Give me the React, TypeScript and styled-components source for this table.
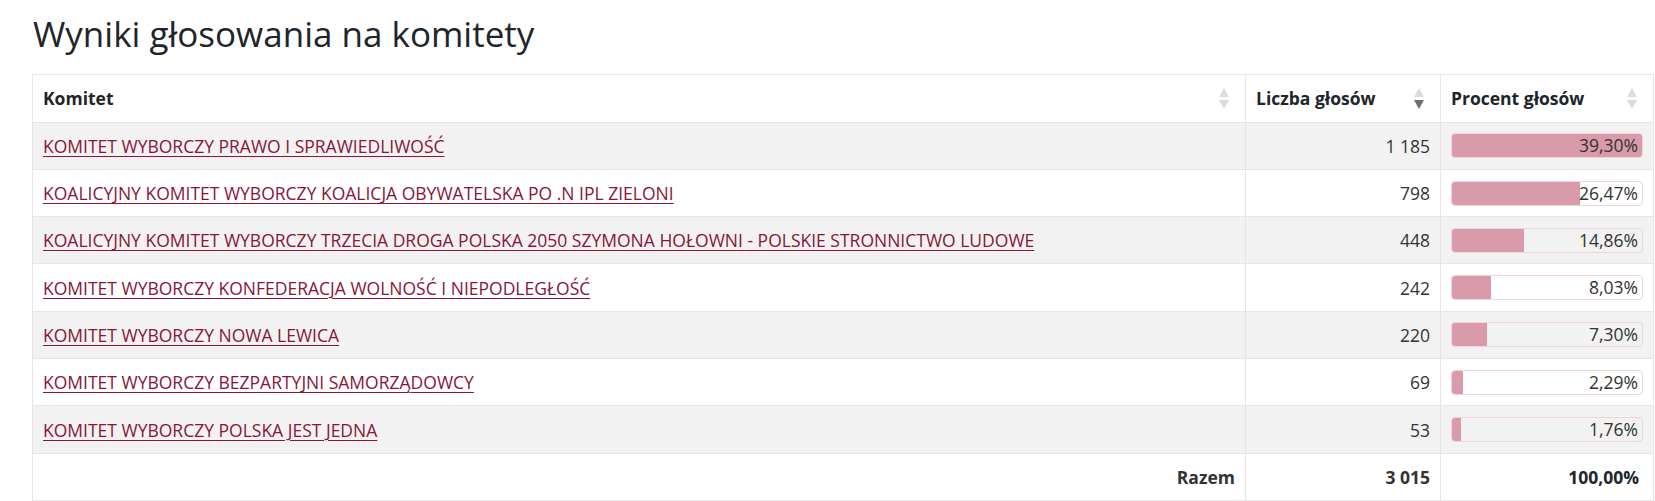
import React from 'react'
import styled, { createGlobalStyle } from 'styled-components'

type Result = {
  name: string,
  votes: string,
  percent: number,
};

const results: Result[] = [
  { name: 'KOMITET WYBORCZY PRAWO I SPRAWIEDLIWOŚĆ', votes: '1 185', percent: 39.3 },
  { name: 'KOALICYJNY KOMITET WYBORCZY KOALICJA OBYWATELSKA PO .N IPL ZIELONI', votes: '798', percent: 26.47 },
  { name: 'KOALICYJNY KOMITET WYBORCZY TRZECIA DROGA POLSKA 2050 SZYMONA HOŁOWNI - POLSKIE STRONNICTWO LUDOWE', votes: '448', percent: 14.86 },
  { name: 'KOMITET WYBORCZY KONFEDERACJA WOLNOŚĆ I NIEPODLEGŁOŚĆ', votes: '242', percent: 8.03 },
  { name: 'KOMITET WYBORCZY NOWA LEWICA', votes: '220', percent: 7.3 },
  { name: 'KOMITET WYBORCZY BEZPARTYJNI SAMORZĄDOWCY', votes: '69', percent: 2.29 },
  { name: 'KOMITET WYBORCZY POLSKA JEST JEDNA', votes: '53', percent: 1.76 },
]

const maxPercent = Math.max(...results.map(r => r.percent))

const formatPercent = (p: number) => p.toFixed(2).replace('.', ',') + '%'

const GlobalStyle = createGlobalStyle`
  body {
    margin: 0;
    background: #fff;
    font-family: "Open Sans", "Noto Sans", sans-serif;
    color: #212529;
  }
`

const Page = styled.main`
  padding: 12px 2px 0 32px;
`

const Title = styled.h1`
  font-size: 35px;
  font-weight: 400;
  line-height: 44px;
  margin: 0 0 18px 1px;
  color: #212529;
`

const Table = styled.table`
  width: 1621px;
  border-collapse: collapse;
  font-size: 17.5px;
  table-layout: fixed;
  border: 1px solid #e6e6e6;
`

const Row = styled.tr<{ $striped?: boolean }>`
  background: ${p => (p.$striped ? '#f2f2f2' : '#fff')};
`

const HeadCell = styled.th<{ $width: number }>`
  width: ${p => p.$width}px;
  height: 47.6px;
  padding: 0 16px 0 10px;
  border: 1px solid #e6e6e6;
  font-weight: 700;
  text-align: left;
  box-sizing: border-box;
`

const HeadInner = styled.div`
  display: flex;
  align-items: center;
  justify-content: space-between;
`

const SortIcon = styled.span`
  display: flex;
  flex-direction: column;
  gap: 3px;
`

const Arrow = styled.span<{ $down?: boolean, $active?: boolean }>`
  width: 0;
  height: 0;
  border-left: 5px solid transparent;
  border-right: 5px solid transparent;
  ${p => p.$down
    ? `border-top: 9px solid ${p.$active ? '#6f6f6f' : '#dcdcdc'};`
    : `border-bottom: 9px solid ${p.$active ? '#6f6f6f' : '#dcdcdc'};`}
`

const Cell = styled.td<{ $align?: string, $bold?: boolean }>`
  height: 47.3px;
  padding: 0 10px;
  border: 1px solid #e6e6e6;
  text-align: ${p => p.$align || 'left'};
  font-weight: ${p => (p.$bold ? 700 : 400)};
  color: #333;
  box-sizing: border-box;
`

const TotalCell = styled(Cell)`
  padding-right: 14px;
  color: #212529;
`

const Link = styled.a`
  color: #8a1538;
  text-decoration: underline;
  text-underline-offset: 3px;
  text-decoration-thickness: 1px;
`

const Bar = styled.div`
  position: relative;
  height: 25px;
  border: 1px solid #f1d4db;
  border-radius: 4px;
  box-sizing: border-box;
  overflow: hidden;
`

const BarFill = styled.div`
  position: absolute;
  left: 0;
  top: 0;
  bottom: 0;
  background: #d99aa9;
`

const BarLabel = styled.span`
  position: relative;
  display: block;
  text-align: right;
  padding-right: 4px;
  line-height: 23px;
  color: #333;
`

const SortArrows = ({ active }: { active?: boolean }) => (
  <SortIcon>
    <Arrow />
    <Arrow $down $active={active} />
  </SortIcon>
)

export default function App() {
  return (
    <Page>
      <GlobalStyle />
      <Title>Wyniki głosowania na komitety</Title>
      <Table>
        <thead>
          <Row>
            <HeadCell $width={1213}>
              <HeadInner>Komitet<SortArrows /></HeadInner>
            </HeadCell>
            <HeadCell $width={195}>
              <HeadInner>Liczba głosów<SortArrows active /></HeadInner>
            </HeadCell>
            <HeadCell $width={213}>
              <HeadInner>Procent głosów<SortArrows /></HeadInner>
            </HeadCell>
          </Row>
        </thead>
        <tbody>
          {results.map((r, i) => (
            <Row key={r.name} $striped={i % 2 === 0}>
              <Cell><Link href="#">{r.name}</Link></Cell>
              <Cell $align="right">{r.votes}</Cell>
              <Cell>
                <Bar>
                  <BarFill style={{ width: `${(r.percent / maxPercent) * 100}%` }} />
                  <BarLabel>{formatPercent(r.percent)}</BarLabel>
                </Bar>
              </Cell>
            </Row>
          ))}
        </tbody>
        <tfoot>
          <Row>
            <Cell $align="right" $bold>Razem</Cell>
            <Cell $align="right" $bold>3 015</Cell>
            <TotalCell $align="right" $bold>100,00%</TotalCell>
          </Row>
        </tfoot>
      </Table>
    </Page>
  )
}
